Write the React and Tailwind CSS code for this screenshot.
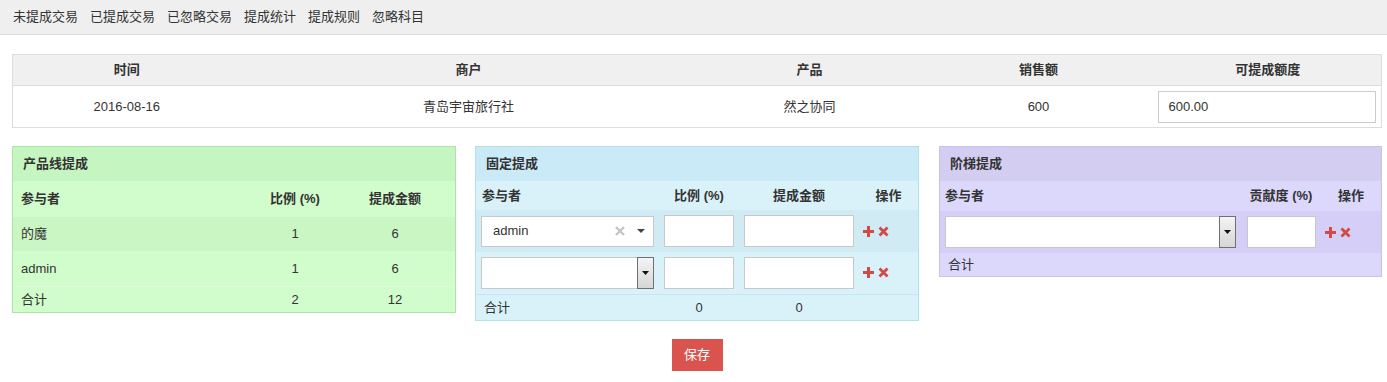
import React from "react";

const font = { fontFamily: '"Liberation Sans", "Noto Sans CJK SC", sans-serif' };

function PlusIcon() {
  return (
    <svg width="11" height="11" viewBox="0 0 11 11" className="shrink-0">
      <path d="M4 0h3v4h4v3H7v4H4V7H0V4h4z" fill="#d24a45" />
    </svg>
  );
}

function CrossIcon() {
  return (
    <svg width="11" height="11" viewBox="0 0 11 11" className="shrink-0">
      <path d="M1.5 1.5l8 8M9.5 1.5l-8 8" stroke="#d24a45" strokeWidth="2.8" />
    </svg>
  );
}

function Actions() {
  return (
    <div className="flex items-center gap-[4px] pl-[4px]">
      <PlusIcon />
      <CrossIcon />
    </div>
  );
}

function NativeSelect({ className }) {
  return (
    <div className={`flex h-[32px] border border-[#c8c8c8] bg-white ${className}`}>
      <div className="flex-1" />
      <div className="my-[-1px] mr-[-1px] flex w-[17px] items-center justify-center border border-[#707070] bg-gradient-to-b from-[#f4f4f4] to-[#d6d6d6]">
        <svg width="7" height="4" viewBox="0 0 7 4">
          <path d="M0 0h7L3.5 4z" fill="#111" />
        </svg>
      </div>
    </div>
  );
}

function Select2({ value }) {
  return (
    <div className="flex h-[31px] items-center border border-[#c8c8c8] bg-white pl-[11px] pr-[8px] text-[13px] text-[#333]">
      <span className="flex-1">{value}</span>
      <svg width="10" height="10" viewBox="0 0 10 10" className="mr-[12px]">
        <path d="M1 1l8 8M9 1l-8 8" stroke="#c4c4c4" strokeWidth="2.4" />
      </svg>
      <svg width="8" height="4" viewBox="0 0 8 4">
        <path d="M0 0h8L4 4z" fill="#444" />
      </svg>
    </div>
  );
}

function TextBox({ className }) {
  return <div className={`h-[32px] border border-[#c8c8c8] bg-white ${className}`} />;
}

export default function App() {
  return (
    <div className="min-h-[382px] bg-white text-[13px] text-[#333]" style={font}>
      <nav className="flex h-[35px] items-center gap-[12px] border-b border-[#dcdcdc] bg-[#efefef] pl-[13px]">
        {["未提成交易", "已提成交易", "已忽略交易", "提成统计", "提成规则", "忽略科目"].map((t) => (
          <a key={t} className="text-[13px] text-[#333]">
            {t}
          </a>
        ))}
      </nav>

      <div className="pl-[12px] pr-[5px] pt-[19px]">
        <table className="w-full table-fixed border border-[#dddddd] text-center">
          <colgroup>
            <col className="w-[228px]" />
            <col className="w-[456px]" />
            <col className="w-[226px]" />
            <col className="w-[232px]" />
            <col />
          </colgroup>
          <thead>
            <tr className="h-[31px] bg-[#f0f0f0] font-bold">
              <th>时间</th>
              <th>商户</th>
              <th>产品</th>
              <th>销售额</th>
              <th>可提成额度</th>
            </tr>
          </thead>
          <tbody>
            <tr className="h-[42px] border-t border-[#dddddd]">
              <td>2016-08-16</td>
              <td>青岛宇宙旅行社</td>
              <td>然之协同</td>
              <td>600</td>
              <td className="pl-[3px] pr-[5px] text-left">
                <div className="flex h-[32px] items-center border border-[#cccccc] bg-white pl-[10px]">600.00</div>
              </td>
            </tr>
          </tbody>
        </table>

        <div className="mt-[18px] flex items-start justify-between">
          {/* 产品线提成 */}
          <div className="w-[444px] border border-[#a9e6a3] bg-[#d1fccc]">
            <div className="flex h-[34px] items-center bg-[#c5f6c1] pl-[10px] font-bold">产品线提成</div>
            <table className="w-full table-fixed">
              <colgroup>
                <col />
                <col className="w-[80px]" />
                <col className="w-[120px]" />
              </colgroup>
              <thead>
                <tr className="h-[36px] font-bold">
                  <th className="pl-[8px] text-left">参与者</th>
                  <th>比例 (%)</th>
                  <th>提成金额</th>
                </tr>
              </thead>
              <tbody>
                <tr className="h-[34px] bg-[#c9f6c3]">
                  <td className="pl-[8px]">的魔</td>
                  <td className="text-center">1</td>
                  <td className="text-center">6</td>
                </tr>
                <tr className="h-[35px]">
                  <td className="pl-[8px]">admin</td>
                  <td className="text-center">1</td>
                  <td className="text-center">6</td>
                </tr>
                <tr className="h-[26px] border-t border-[#dff9da]">
                  <td className="pl-[8px]">合计</td>
                  <td className="text-center">2</td>
                  <td className="text-center">12</td>
                </tr>
              </tbody>
            </table>
          </div>

          {/* 固定提成 */}
          <div className="ml-[19px] w-[444px] border border-[#b5dfec] bg-[#d9f2f9]">
            <div className="flex h-[34px] items-center bg-[#c9eaf6] pl-[10px] font-bold">固定提成</div>
            <table className="w-full table-fixed">
              <colgroup>
                <col />
                <col className="w-[80px]" />
                <col className="w-[120px]" />
                <col className="w-[59px]" />
              </colgroup>
              <thead>
                <tr className="h-[29px] font-bold">
                  <th className="pl-[6px] text-left">参与者</th>
                  <th>比例 (%)</th>
                  <th>提成金额</th>
                  <th>操作</th>
                </tr>
              </thead>
              <tbody>
                <tr className="h-[42px] bg-[#d0ebf4]">
                  <td className="px-[5px]">
                    <Select2 value="admin" />
                  </td>
                  <td className="pl-[5px] pr-[5px]">
                    <TextBox />
                  </td>
                  <td className="pl-[5px] pr-[5px]">
                    <TextBox />
                  </td>
                  <td>
                    <Actions />
                  </td>
                </tr>
                <tr className="h-[42px]">
                  <td className="px-[5px]">
                    <NativeSelect />
                  </td>
                  <td className="pl-[5px] pr-[5px]">
                    <TextBox />
                  </td>
                  <td className="pl-[5px] pr-[5px]">
                    <TextBox />
                  </td>
                  <td>
                    <Actions />
                  </td>
                </tr>
                <tr className="h-[26px] border-t border-[#c6e6f1]">
                  <td className="pl-[8px]">合计</td>
                  <td className="text-center">0</td>
                  <td className="text-center">0</td>
                  <td />
                </tr>
              </tbody>
            </table>
          </div>

          {/* 阶梯提成 */}
          <div className="ml-[20px] w-[443px] border border-[#c9c1ec] bg-[#dcd8fc]">
            <div className="flex h-[34px] items-center bg-[#d3cdf2] pl-[10px] font-bold">阶梯提成</div>
            <table className="w-full table-fixed">
              <colgroup>
                <col />
                <col className="w-[80px]" />
                <col className="w-[60px]" />
              </colgroup>
              <thead>
                <tr className="h-[30px] font-bold">
                  <th className="pl-[5px] text-left">参与者</th>
                  <th>贡献度 (%)</th>
                  <th>操作</th>
                </tr>
              </thead>
              <tbody>
                <tr className="h-[42px] bg-[#d5cff7]">
                  <td className="px-[5px]">
                    <NativeSelect />
                  </td>
                  <td className="pl-[6px] pr-[5px]">
                    <TextBox />
                  </td>
                  <td>
                    <Actions />
                  </td>
                </tr>
                <tr className="h-[23px]">
                  <td className="pl-[8px]">合计</td>
                  <td />
                  <td />
                </tr>
              </tbody>
            </table>
          </div>
        </div>

        <div className="mt-[18px] flex justify-center">
          <button className="h-[32px] w-[51px] bg-[#d9534f] text-[13px] text-white">保存</button>
        </div>
      </div>
    </div>
  );
}
